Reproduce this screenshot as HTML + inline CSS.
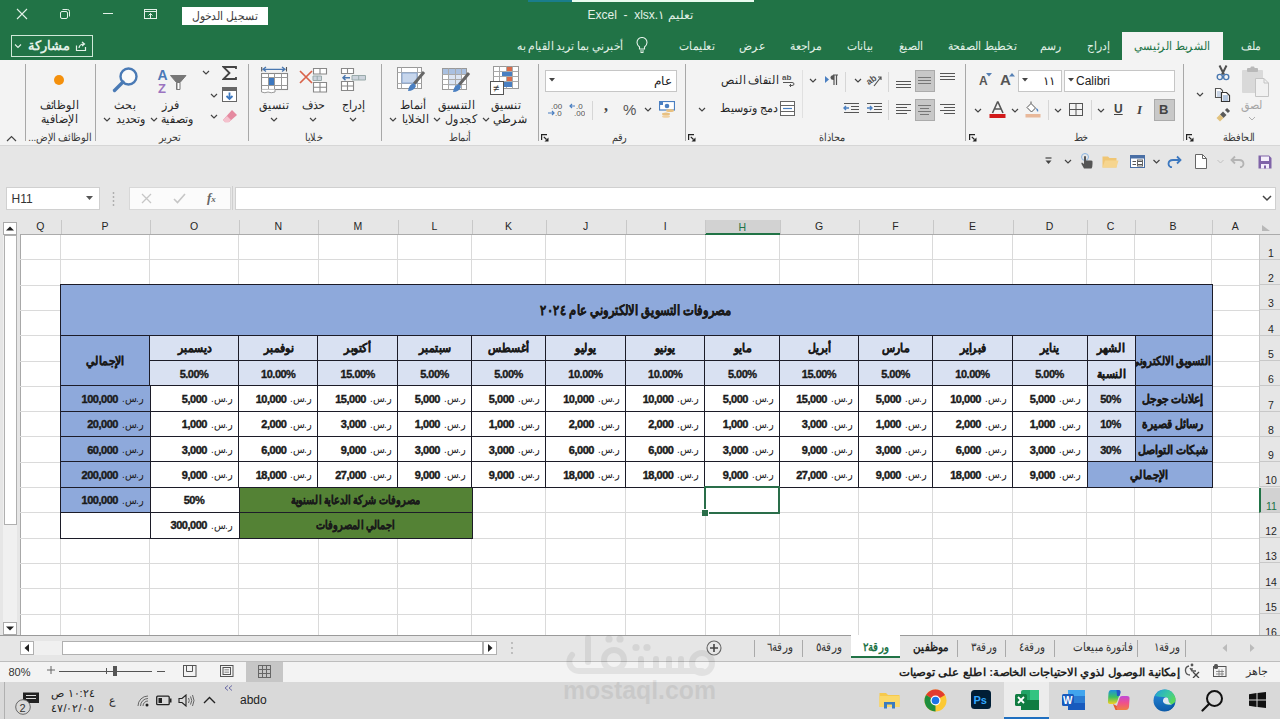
<!DOCTYPE html><html><head><meta charset="utf-8"><style>*{margin:0;padding:0;box-sizing:border-box}
html,body{width:1280px;height:719px;overflow:hidden;background:#e6e6e6;font-family:"Liberation Sans",sans-serif;position:relative}
.a{position:absolute}
#grid{position:absolute;left:0;top:0;width:1280px;height:719px}
.colhdr{position:absolute;left:20px;top:216px;width:1260px;height:18.5px;background:#e6e6e6;border-bottom:1px solid #ababab}
.ch{position:absolute;top:216px;height:18px;line-height:20px;text-align:center;font-size:10.5px;color:#262626}
.ch.sel{background:#d2d2d2;color:#217346;border-bottom:2px solid #217346;top:219.5px;height:15.5px;line-height:14px}
.chsep{position:absolute;top:220px;width:1px;height:14px;background:#c8c8c8}
.corner{position:absolute;left:1259px;top:216px;width:21px;height:18px}
.rh{position:absolute;left:1259px;width:21px;background:#e6e6e6;border-bottom:1px solid #c8c8c8;border-left:1px solid #c8c8c8;font-size:12px;color:#262626}
.rh span{position:absolute;left:0;right:-2px;text-align:center;bottom:0px;line-height:11px;font-size:10.5px}
.rh.sel{background:#d2d2d2;color:#217346;border-left:2px solid #217346}
.cells{position:absolute;left:20px;top:234.5px;width:1239px;height:401px;background:#fff}
.vl{position:absolute;top:234.5px;height:401px;width:1px;background:#dadada}
.hl{position:absolute;left:20px;width:1239px;height:1px;background:#dadada}
.tc{position:absolute;display:flex;align-items:center;justify-content:center;font-weight:bold;font-size:12px;color:#1a1a1a;white-space:nowrap;direction:rtl}
.tc.bd{outline:1px solid #1c1c28;outline-offset:-0.5px}
.tc.title{font-size:14px}
.tc.title .t{font-size:14px;transform:scaleX(0.82)}
.tc.val{justify-content:flex-end;padding:0 6.5px 0 0;direction:ltr;gap:4px}
.cur{font-weight:normal;font-size:11px;order:2;direction:rtl;display:inline-block;transform:scaleX(0.88);transform-origin:right center;margin-left:-3px}
.amt{order:1;font-size:11px;letter-spacing:-0.5px;-webkit-text-stroke:0.4px #1a1a1a}
.selbox{position:absolute;border:2px solid #2a6e4a}
.handle{position:absolute;width:7px;height:7px;background:#2a6e4a;border:1px solid #fff;border-left:none;border-bottom:none;width:6.5px}
.ovf{position:absolute;right:1px;top:50%;transform:translateY(-50%) scaleX(0.83);transform-origin:right center;-webkit-text-stroke:0.35px #1a1a1a}
.clip{overflow:hidden}
.signin{left:182px;top:6.5px;width:86px;height:18px;background:#fff;color:#3c3c3c;font-size:11.5px;line-height:18px;text-align:center;direction:rtl}
.signin span{display:inline-block;transform:scaleX(0.9)}
.wtitle{left:540px;top:6px;width:200px;text-align:center;color:#e3f1e8;font-size:12px;line-height:18px;white-space:nowrap}
.share{left:11px;top:35px;width:82px;height:22px;border:1.3px solid #cfe9d8}
.shtxt{position:absolute;right:22px;top:1px;font-size:13px;font-weight:bold;color:#e3f1e8;line-height:18px}
.tab{top:37px;transform:translateX(-50%) scaleX(0.9);color:#e3f1e8;font-size:12px;line-height:18px;white-space:nowrap;direction:rtl}
.tab.act{color:#217346}
.sep{position:absolute;top:64px;width:1px;height:77px;background:#a8a8a8}
.glbl{position:absolute;top:131px;transform:translateX(-50%) scaleX(0.88);font-size:11px;line-height:13px;color:#3a3a3a;white-space:nowrap;direction:rtl}
.rt{position:absolute;transform:translateX(-50%) scaleX(0.92);font-size:11.5px;line-height:13px;color:#262626;white-space:nowrap;direction:rtl}
.rt.dis{color:#a6a6a6}
.box{position:absolute;background:#fff;border:1px solid #c6c6c6}
.tsep{position:absolute;top:640px;width:1px;height:17px;background:#aaa}
.stab{position:absolute;top:640px;transform:translateX(-50%) scaleX(0.86);font-size:11.5px;line-height:15px;color:#333;white-space:nowrap;direction:rtl}

.tc .t{display:inline-block;font-size:11.5px;transform:scaleX(0.9);-webkit-text-stroke:0.35px #1a1a1a}
.tc.num .t{transform:none;font-size:11px;letter-spacing:-0.5px;-webkit-text-stroke:0.35px #1a1a1a}
.tc.grn .t{transform:scaleX(0.81)}
</style></head><body>
<div id="grid"><div class="colhdr"></div><div class="ch" style="left:20px;width:40.5px">Q</div><div class="ch" style="left:60.5px;width:89.0px">P</div><div class="chsep" style="left:60.5px"></div><div class="ch" style="left:149.5px;width:89.0px">O</div><div class="chsep" style="left:149.5px"></div><div class="ch" style="left:238.5px;width:79.5px">N</div><div class="chsep" style="left:238.5px"></div><div class="ch" style="left:318px;width:79.5px">M</div><div class="chsep" style="left:318px"></div><div class="ch" style="left:397.5px;width:74.0px">L</div><div class="chsep" style="left:397.5px"></div><div class="ch" style="left:471.5px;width:74.0px">K</div><div class="chsep" style="left:471.5px"></div><div class="ch" style="left:545.5px;width:80.0px">J</div><div class="chsep" style="left:545.5px"></div><div class="ch" style="left:625.5px;width:79.5px">I</div><div class="chsep" style="left:625.5px"></div><div class="ch sel" style="left:705px;width:74.5px">H</div><div class="chsep" style="left:705px"></div><div class="ch" style="left:779.5px;width:79.0px">G</div><div class="chsep" style="left:779.5px"></div><div class="ch" style="left:858.5px;width:74.0px">F</div><div class="chsep" style="left:858.5px"></div><div class="ch" style="left:932.5px;width:80.0px">E</div><div class="chsep" style="left:932.5px"></div><div class="ch" style="left:1012.5px;width:74.0px">D</div><div class="chsep" style="left:1012.5px"></div><div class="ch" style="left:1086.5px;width:48.0px">C</div><div class="chsep" style="left:1086.5px"></div><div class="ch" style="left:1134.5px;width:77.0px">B</div><div class="chsep" style="left:1134.5px"></div><div class="ch" style="left:1211.5px;width:47.5px">A</div><div class="chsep" style="left:1211.5px"></div><div class="corner"></div><svg class="a" style="left:1262px;top:225px" width="8" height="6" viewBox="0 0 8 6"><path d="M0 6H8L0 0Z" fill="#b8b8b8"/></svg><div class="rh" style="top:234.5px;height:25.30000000000001px"><span>1</span></div><div class="rh" style="top:259.8px;height:25.30000000000001px"><span>2</span></div><div class="rh" style="top:285.1px;height:25.299999999999955px"><span>3</span></div><div class="rh" style="top:310.4px;height:25.30000000000001px"><span>4</span></div><div class="rh" style="top:335.7px;height:25.30000000000001px"><span>5</span></div><div class="rh" style="top:361.0px;height:25.30000000000001px"><span>6</span></div><div class="rh" style="top:386.3px;height:25.30000000000001px"><span>7</span></div><div class="rh" style="top:411.6px;height:25.299999999999955px"><span>8</span></div><div class="rh" style="top:436.9px;height:25.300000000000068px"><span>9</span></div><div class="rh" style="top:462.20000000000005px;height:25.299999999999955px"><span>10</span></div><div class="rh sel" style="top:487.5px;height:25.299999999999955px"><span>11</span></div><div class="rh" style="top:512.8px;height:25.300000000000068px"><span>12</span></div><div class="rh" style="top:538.1px;height:25.300000000000068px"><span>13</span></div><div class="rh" style="top:563.4000000000001px;height:25.299999999999955px"><span>14</span></div><div class="rh" style="top:588.7px;height:25.299999999999955px"><span>15</span></div><div class="rh" style="top:614.0px;height:25.299999999999955px"><span>16</span></div><div class="cells"></div><div class="a" style="left:19.5px;top:234px;width:1px;height:402px;background:#a8a8a8"></div><div class="vl" style="left:60.0px"></div><div class="vl" style="left:149.0px"></div><div class="vl" style="left:238.0px"></div><div class="vl" style="left:317.5px"></div><div class="vl" style="left:397.0px"></div><div class="vl" style="left:471.0px"></div><div class="vl" style="left:545.0px"></div><div class="vl" style="left:625.0px"></div><div class="vl" style="left:704.5px"></div><div class="vl" style="left:779.0px"></div><div class="vl" style="left:858.0px"></div><div class="vl" style="left:932.0px"></div><div class="vl" style="left:1012.0px"></div><div class="vl" style="left:1086.0px"></div><div class="vl" style="left:1134.0px"></div><div class="vl" style="left:1211.0px"></div><div class="hl" style="top:259.3px"></div><div class="hl" style="top:284.6px"></div><div class="hl" style="top:309.9px"></div><div class="hl" style="top:335.2px"></div><div class="hl" style="top:360.5px"></div><div class="hl" style="top:385.8px"></div><div class="hl" style="top:411.1px"></div><div class="hl" style="top:436.4px"></div><div class="hl" style="top:461.70000000000005px"></div><div class="hl" style="top:487.0px"></div><div class="hl" style="top:512.3px"></div><div class="hl" style="top:537.6px"></div><div class="hl" style="top:562.9000000000001px"></div><div class="hl" style="top:588.2px"></div><div class="hl" style="top:613.5px"></div><div class="hl" style="top:638.8px"></div><div class="tc bd title" style="left:60.5px;top:285.1px;width:1151.0px;height:50.599999999999966px;background:#8ea9db;"><span class="t">مصروفات التسويق الالكتروني عام ٢٠٢٤</span></div><div class="tc bd lbl" style="left:60.5px;top:335.7px;width:89.0px;height:50.60000000000002px;background:#8ea9db;"><span class="t">الإجمالي</span></div><div class="tc bd clip" style="left:1134.5px;top:335.7px;width:77.0px;height:50.60000000000002px;background:#8ea9db;"><span class="ovf">التسويق الالكتروني</span></div><div class="tc bd lbl" style="left:1086.5px;top:335.7px;width:48.0px;height:25.30000000000001px;background:#d9e1f2;"><span class="t">الشهر</span></div><div class="tc bd lbl" style="left:1086.5px;top:361.0px;width:48.0px;height:25.30000000000001px;background:#d9e1f2;"><span class="t">النسبة</span></div><div class="tc bd lbl" style="left:149.5px;top:335.7px;width:89.0px;height:25.30000000000001px;background:#d9e1f2;"><span class="t">ديسمبر</span></div><div class="tc bd num" style="left:149.5px;top:361.0px;width:89.0px;height:25.30000000000001px;background:#d9e1f2;"><span class="t">5.00%</span></div><div class="tc bd lbl" style="left:238.5px;top:335.7px;width:79.5px;height:25.30000000000001px;background:#d9e1f2;"><span class="t">نوفمبر</span></div><div class="tc bd num" style="left:238.5px;top:361.0px;width:79.5px;height:25.30000000000001px;background:#d9e1f2;"><span class="t">10.00%</span></div><div class="tc bd lbl" style="left:318px;top:335.7px;width:79.5px;height:25.30000000000001px;background:#d9e1f2;"><span class="t">أكتوبر</span></div><div class="tc bd num" style="left:318px;top:361.0px;width:79.5px;height:25.30000000000001px;background:#d9e1f2;"><span class="t">15.00%</span></div><div class="tc bd lbl" style="left:397.5px;top:335.7px;width:74.0px;height:25.30000000000001px;background:#d9e1f2;"><span class="t">سبتمبر</span></div><div class="tc bd num" style="left:397.5px;top:361.0px;width:74.0px;height:25.30000000000001px;background:#d9e1f2;"><span class="t">5.00%</span></div><div class="tc bd lbl" style="left:471.5px;top:335.7px;width:74.0px;height:25.30000000000001px;background:#d9e1f2;"><span class="t">أغسطس</span></div><div class="tc bd num" style="left:471.5px;top:361.0px;width:74.0px;height:25.30000000000001px;background:#d9e1f2;"><span class="t">5.00%</span></div><div class="tc bd lbl" style="left:545.5px;top:335.7px;width:80.0px;height:25.30000000000001px;background:#d9e1f2;"><span class="t">يوليو</span></div><div class="tc bd num" style="left:545.5px;top:361.0px;width:80.0px;height:25.30000000000001px;background:#d9e1f2;"><span class="t">10.00%</span></div><div class="tc bd lbl" style="left:625.5px;top:335.7px;width:79.5px;height:25.30000000000001px;background:#d9e1f2;"><span class="t">يونيو</span></div><div class="tc bd num" style="left:625.5px;top:361.0px;width:79.5px;height:25.30000000000001px;background:#d9e1f2;"><span class="t">10.00%</span></div><div class="tc bd lbl" style="left:705px;top:335.7px;width:74.5px;height:25.30000000000001px;background:#d9e1f2;"><span class="t">مايو</span></div><div class="tc bd num" style="left:705px;top:361.0px;width:74.5px;height:25.30000000000001px;background:#d9e1f2;"><span class="t">5.00%</span></div><div class="tc bd lbl" style="left:779.5px;top:335.7px;width:79.0px;height:25.30000000000001px;background:#d9e1f2;"><span class="t">أبريل</span></div><div class="tc bd num" style="left:779.5px;top:361.0px;width:79.0px;height:25.30000000000001px;background:#d9e1f2;"><span class="t">15.00%</span></div><div class="tc bd lbl" style="left:858.5px;top:335.7px;width:74.0px;height:25.30000000000001px;background:#d9e1f2;"><span class="t">مارس</span></div><div class="tc bd num" style="left:858.5px;top:361.0px;width:74.0px;height:25.30000000000001px;background:#d9e1f2;"><span class="t">5.00%</span></div><div class="tc bd lbl" style="left:932.5px;top:335.7px;width:80.0px;height:25.30000000000001px;background:#d9e1f2;"><span class="t">فبراير</span></div><div class="tc bd num" style="left:932.5px;top:361.0px;width:80.0px;height:25.30000000000001px;background:#d9e1f2;"><span class="t">10.00%</span></div><div class="tc bd lbl" style="left:1012.5px;top:335.7px;width:74.0px;height:25.30000000000001px;background:#d9e1f2;"><span class="t">يناير</span></div><div class="tc bd num" style="left:1012.5px;top:361.0px;width:74.0px;height:25.30000000000001px;background:#d9e1f2;"><span class="t">5.00%</span></div><div class="tc bd lbl" style="left:1134.5px;top:386.3px;width:77.0px;height:25.30000000000001px;background:#8ea9db;"><span class="t">إعلانات جوجل</span></div><div class="tc bd num" style="left:1086.5px;top:386.3px;width:48.0px;height:25.30000000000001px;background:#d9e1f2;"><span class="t">50%</span></div><div class="tc bd val" style="left:149.5px;top:386.3px;width:89.0px;height:25.30000000000001px;background:#fff;"><span class="cur">ر.س.</span><span class="amt">5,000</span></div><div class="tc bd val" style="left:238.5px;top:386.3px;width:79.5px;height:25.30000000000001px;background:#fff;"><span class="cur">ر.س.</span><span class="amt">10,000</span></div><div class="tc bd val" style="left:318px;top:386.3px;width:79.5px;height:25.30000000000001px;background:#fff;"><span class="cur">ر.س.</span><span class="amt">15,000</span></div><div class="tc bd val" style="left:397.5px;top:386.3px;width:74.0px;height:25.30000000000001px;background:#fff;"><span class="cur">ر.س.</span><span class="amt">5,000</span></div><div class="tc bd val" style="left:471.5px;top:386.3px;width:74.0px;height:25.30000000000001px;background:#fff;"><span class="cur">ر.س.</span><span class="amt">5,000</span></div><div class="tc bd val" style="left:545.5px;top:386.3px;width:80.0px;height:25.30000000000001px;background:#fff;"><span class="cur">ر.س.</span><span class="amt">10,000</span></div><div class="tc bd val" style="left:625.5px;top:386.3px;width:79.5px;height:25.30000000000001px;background:#fff;"><span class="cur">ر.س.</span><span class="amt">10,000</span></div><div class="tc bd val" style="left:705px;top:386.3px;width:74.5px;height:25.30000000000001px;background:#fff;"><span class="cur">ر.س.</span><span class="amt">5,000</span></div><div class="tc bd val" style="left:779.5px;top:386.3px;width:79.0px;height:25.30000000000001px;background:#fff;"><span class="cur">ر.س.</span><span class="amt">15,000</span></div><div class="tc bd val" style="left:858.5px;top:386.3px;width:74.0px;height:25.30000000000001px;background:#fff;"><span class="cur">ر.س.</span><span class="amt">5,000</span></div><div class="tc bd val" style="left:932.5px;top:386.3px;width:80.0px;height:25.30000000000001px;background:#fff;"><span class="cur">ر.س.</span><span class="amt">10,000</span></div><div class="tc bd val" style="left:1012.5px;top:386.3px;width:74.0px;height:25.30000000000001px;background:#fff;"><span class="cur">ر.س.</span><span class="amt">5,000</span></div><div class="tc bd val" style="left:60.5px;top:386.3px;width:89.0px;height:25.30000000000001px;background:#8ea9db;"><span class="cur">ر.س.</span><span class="amt">100,000</span></div><div class="tc bd lbl" style="left:1134.5px;top:411.6px;width:77.0px;height:25.299999999999955px;background:#8ea9db;"><span class="t">رسائل قصيرة</span></div><div class="tc bd num" style="left:1086.5px;top:411.6px;width:48.0px;height:25.299999999999955px;background:#d9e1f2;"><span class="t">10%</span></div><div class="tc bd val" style="left:149.5px;top:411.6px;width:89.0px;height:25.299999999999955px;background:#fff;"><span class="cur">ر.س.</span><span class="amt">1,000</span></div><div class="tc bd val" style="left:238.5px;top:411.6px;width:79.5px;height:25.299999999999955px;background:#fff;"><span class="cur">ر.س.</span><span class="amt">2,000</span></div><div class="tc bd val" style="left:318px;top:411.6px;width:79.5px;height:25.299999999999955px;background:#fff;"><span class="cur">ر.س.</span><span class="amt">3,000</span></div><div class="tc bd val" style="left:397.5px;top:411.6px;width:74.0px;height:25.299999999999955px;background:#fff;"><span class="cur">ر.س.</span><span class="amt">1,000</span></div><div class="tc bd val" style="left:471.5px;top:411.6px;width:74.0px;height:25.299999999999955px;background:#fff;"><span class="cur">ر.س.</span><span class="amt">1,000</span></div><div class="tc bd val" style="left:545.5px;top:411.6px;width:80.0px;height:25.299999999999955px;background:#fff;"><span class="cur">ر.س.</span><span class="amt">2,000</span></div><div class="tc bd val" style="left:625.5px;top:411.6px;width:79.5px;height:25.299999999999955px;background:#fff;"><span class="cur">ر.س.</span><span class="amt">2,000</span></div><div class="tc bd val" style="left:705px;top:411.6px;width:74.5px;height:25.299999999999955px;background:#fff;"><span class="cur">ر.س.</span><span class="amt">1,000</span></div><div class="tc bd val" style="left:779.5px;top:411.6px;width:79.0px;height:25.299999999999955px;background:#fff;"><span class="cur">ر.س.</span><span class="amt">3,000</span></div><div class="tc bd val" style="left:858.5px;top:411.6px;width:74.0px;height:25.299999999999955px;background:#fff;"><span class="cur">ر.س.</span><span class="amt">1,000</span></div><div class="tc bd val" style="left:932.5px;top:411.6px;width:80.0px;height:25.299999999999955px;background:#fff;"><span class="cur">ر.س.</span><span class="amt">2,000</span></div><div class="tc bd val" style="left:1012.5px;top:411.6px;width:74.0px;height:25.299999999999955px;background:#fff;"><span class="cur">ر.س.</span><span class="amt">1,000</span></div><div class="tc bd val" style="left:60.5px;top:411.6px;width:89.0px;height:25.299999999999955px;background:#8ea9db;"><span class="cur">ر.س.</span><span class="amt">20,000</span></div><div class="tc bd lbl" style="left:1134.5px;top:436.9px;width:77.0px;height:25.300000000000068px;background:#8ea9db;"><span class="t">شبكات التواصل</span></div><div class="tc bd num" style="left:1086.5px;top:436.9px;width:48.0px;height:25.300000000000068px;background:#d9e1f2;"><span class="t">30%</span></div><div class="tc bd val" style="left:149.5px;top:436.9px;width:89.0px;height:25.300000000000068px;background:#fff;"><span class="cur">ر.س.</span><span class="amt">3,000</span></div><div class="tc bd val" style="left:238.5px;top:436.9px;width:79.5px;height:25.300000000000068px;background:#fff;"><span class="cur">ر.س.</span><span class="amt">6,000</span></div><div class="tc bd val" style="left:318px;top:436.9px;width:79.5px;height:25.300000000000068px;background:#fff;"><span class="cur">ر.س.</span><span class="amt">9,000</span></div><div class="tc bd val" style="left:397.5px;top:436.9px;width:74.0px;height:25.300000000000068px;background:#fff;"><span class="cur">ر.س.</span><span class="amt">3,000</span></div><div class="tc bd val" style="left:471.5px;top:436.9px;width:74.0px;height:25.300000000000068px;background:#fff;"><span class="cur">ر.س.</span><span class="amt">3,000</span></div><div class="tc bd val" style="left:545.5px;top:436.9px;width:80.0px;height:25.300000000000068px;background:#fff;"><span class="cur">ر.س.</span><span class="amt">6,000</span></div><div class="tc bd val" style="left:625.5px;top:436.9px;width:79.5px;height:25.300000000000068px;background:#fff;"><span class="cur">ر.س.</span><span class="amt">6,000</span></div><div class="tc bd val" style="left:705px;top:436.9px;width:74.5px;height:25.300000000000068px;background:#fff;"><span class="cur">ر.س.</span><span class="amt">3,000</span></div><div class="tc bd val" style="left:779.5px;top:436.9px;width:79.0px;height:25.300000000000068px;background:#fff;"><span class="cur">ر.س.</span><span class="amt">9,000</span></div><div class="tc bd val" style="left:858.5px;top:436.9px;width:74.0px;height:25.300000000000068px;background:#fff;"><span class="cur">ر.س.</span><span class="amt">3,000</span></div><div class="tc bd val" style="left:932.5px;top:436.9px;width:80.0px;height:25.300000000000068px;background:#fff;"><span class="cur">ر.س.</span><span class="amt">6,000</span></div><div class="tc bd val" style="left:1012.5px;top:436.9px;width:74.0px;height:25.300000000000068px;background:#fff;"><span class="cur">ر.س.</span><span class="amt">3,000</span></div><div class="tc bd val" style="left:60.5px;top:436.9px;width:89.0px;height:25.300000000000068px;background:#8ea9db;"><span class="cur">ر.س.</span><span class="amt">60,000</span></div><div class="tc bd lbl" style="left:1086.5px;top:462.20000000000005px;width:125.0px;height:25.299999999999955px;background:#8ea9db;"><span class="t">الإجمالي</span></div><div class="tc bd val" style="left:149.5px;top:462.20000000000005px;width:89.0px;height:25.299999999999955px;background:#fff;"><span class="cur">ر.س.</span><span class="amt">9,000</span></div><div class="tc bd val" style="left:238.5px;top:462.20000000000005px;width:79.5px;height:25.299999999999955px;background:#fff;"><span class="cur">ر.س.</span><span class="amt">18,000</span></div><div class="tc bd val" style="left:318px;top:462.20000000000005px;width:79.5px;height:25.299999999999955px;background:#fff;"><span class="cur">ر.س.</span><span class="amt">27,000</span></div><div class="tc bd val" style="left:397.5px;top:462.20000000000005px;width:74.0px;height:25.299999999999955px;background:#fff;"><span class="cur">ر.س.</span><span class="amt">9,000</span></div><div class="tc bd val" style="left:471.5px;top:462.20000000000005px;width:74.0px;height:25.299999999999955px;background:#fff;"><span class="cur">ر.س.</span><span class="amt">9,000</span></div><div class="tc bd val" style="left:545.5px;top:462.20000000000005px;width:80.0px;height:25.299999999999955px;background:#fff;"><span class="cur">ر.س.</span><span class="amt">18,000</span></div><div class="tc bd val" style="left:625.5px;top:462.20000000000005px;width:79.5px;height:25.299999999999955px;background:#fff;"><span class="cur">ر.س.</span><span class="amt">18,000</span></div><div class="tc bd val" style="left:705px;top:462.20000000000005px;width:74.5px;height:25.299999999999955px;background:#fff;"><span class="cur">ر.س.</span><span class="amt">9,000</span></div><div class="tc bd val" style="left:779.5px;top:462.20000000000005px;width:79.0px;height:25.299999999999955px;background:#fff;"><span class="cur">ر.س.</span><span class="amt">27,000</span></div><div class="tc bd val" style="left:858.5px;top:462.20000000000005px;width:74.0px;height:25.299999999999955px;background:#fff;"><span class="cur">ر.س.</span><span class="amt">9,000</span></div><div class="tc bd val" style="left:932.5px;top:462.20000000000005px;width:80.0px;height:25.299999999999955px;background:#fff;"><span class="cur">ر.س.</span><span class="amt">18,000</span></div><div class="tc bd val" style="left:1012.5px;top:462.20000000000005px;width:74.0px;height:25.299999999999955px;background:#fff;"><span class="cur">ر.س.</span><span class="amt">9,000</span></div><div class="tc bd val" style="left:60.5px;top:462.20000000000005px;width:89.0px;height:25.299999999999955px;background:#8ea9db;"><span class="cur">ر.س.</span><span class="amt">200,000</span></div><div class="tc bd lbl grn" style="left:238.5px;top:487.5px;width:233.0px;height:25.299999999999955px;background:#548235;"><span class="t">مصروفات شركة الدعاية السنوية</span></div><div class="tc bd num" style="left:149.5px;top:487.5px;width:89.0px;height:25.299999999999955px;background:#fff;"><span class="t">50%</span></div><div class="tc bd val" style="left:60.5px;top:487.5px;width:89.0px;height:25.299999999999955px;background:#8ea9db;"><span class="cur">ر.س.</span><span class="amt">100,000</span></div><div class="tc bd lbl grn" style="left:238.5px;top:512.8px;width:233.0px;height:25.300000000000068px;background:#548235;"><span class="t">اجمالي المصروفات</span></div><div class="tc bd val" style="left:149.5px;top:512.8px;width:89.0px;height:25.300000000000068px;background:#fff;"><span class="cur">ر.س.</span><span class="amt">300,000</span></div><div class="tc bd val" style="left:60.5px;top:512.8px;width:89.0px;height:25.300000000000068px;background:#fff;"></div><div class="selbox" style="left:704px;top:486px;width:76px;height:27.5px"></div><div class="handle" style="left:702px;top:509px"></div></div>
<div class="a" style="left:0;top:0;width:1280px;height:60px;background:#217346"></div>
<div class="a" style="left:528px;top:0;width:44px;height:2px;background:#1a7d8c"></div>
<div class="a" style="left:572px;top:0;width:182px;height:2px;background:#e9fbef"></div>
<!-- window controls -->
<svg class="a" style="left:15px;top:7px" width="14" height="14" viewBox="0 0 14 14"><path d="M2 2L12 12M12 2L2 12" stroke="#e3f1e8" stroke-width="1.1"/></svg>
<svg class="a" style="left:58px;top:7px" width="14" height="14" viewBox="0 0 14 14"><rect x="2.5" y="4.5" width="7" height="7" rx="1.5" fill="none" stroke="#e3f1e8" stroke-width="1"/><path d="M4.5 2.5H9.5Q11.5 2.5 11.5 4.5V9.5" fill="none" stroke="#e3f1e8" stroke-width="1"/></svg>
<div class="a" style="left:103px;top:13px;width:10px;height:1px;background:#e3f1e8"></div>
<svg class="a" style="left:143px;top:8px" width="15" height="12" viewBox="0 0 15 12"><rect x="1.5" y="1.5" width="12" height="9" fill="none" stroke="#e3f1e8" stroke-width="1"/><path d="M1.5 3.5H13.5" stroke="#e3f1e8" stroke-width="1"/><path d="M7.5 10V5.5M5.5 7.5L7.5 5.5L9.5 7.5" fill="none" stroke="#e3f1e8" stroke-width="1"/></svg>
<div class="a signin"><span>تسجيل الدخول</span></div>
<div class="a wtitle"><span style="display:inline-block">Excel &nbsp;-&nbsp; xlsx.١</span> <span style="display:inline-block">تعليم</span></div>
<!-- share -->
<div class="a share"><span class="shtxt">مشاركة</span></div>
<svg class="a" style="left:74px;top:39px" width="14" height="14" viewBox="0 0 14 14"><path d="M2.5 6.5V11.5H11.5V8" fill="none" stroke="#e3f1e8" stroke-width="1.2"/><path d="M5 9Q5.5 5 10 5M8 3L10.5 5L8 7" fill="none" stroke="#e3f1e8" stroke-width="1.2"/></svg>
<svg class="a" style="left:14px;top:43px" width="8" height="6" viewBox="0 0 8 6"><path d="M1 1.5L4 4.5L7 1.5" fill="none" stroke="#e3f1e8" stroke-width="1.1"/></svg>
<!-- tabs -->
<div class="a" style="left:1122px;top:32px;width:101px;height:28px;background:#f3f3f3"></div>
<div class="a tab" style="left:1251px">ملف</div>
<div class="a tab act" style="left:1172px">الشريط الرئيسي</div>
<div class="a tab" style="left:1098px">إدراج</div>
<div class="a tab" style="left:1051px">رسم</div>
<div class="a tab" style="left:982px">تخطيط الصفحة</div>
<div class="a tab" style="left:911px">الصيغ</div>
<div class="a tab" style="left:860px">بيانات</div>
<div class="a tab" style="left:806px">مراجعة</div>
<div class="a tab" style="left:752px">عرض</div>
<div class="a tab" style="left:697px">تعليمات</div>
<svg class="a" style="left:636px;top:37px" width="12" height="17" viewBox="0 0 12 17"><path d="M3.5 12V10Q1 8 1 5.5A5 5 0 0 1 11 5.5Q11 8 8.5 10V12ZM4 14H8M4.5 15.5H7.5" fill="none" stroke="#e3f1e8" stroke-width="1.1"/></svg>
<div class="a tab" style="left:570px">أخبرني بما تريد القيام به</div>

<div class="a" style="left:0;top:60px;width:1280px;height:86px;background:#f3f3f3;border-bottom:1px solid #d6d6d6"></div>
<!-- group separators -->
<div class="sep" style="left:25px"></div>
<div class="sep" style="left:95px"></div>
<div class="sep" style="left:248px"></div>
<div class="sep" style="left:381px"></div>
<div class="sep" style="left:538px"></div>
<div class="sep" style="left:685px"></div>
<div class="sep" style="left:965px"></div>
<div class="sep" style="left:1183px"></div>
<!-- group labels -->
<div class="glbl" style="left:1239px">الحافظة</div>
<div class="glbl" style="left:1081px">خط</div>
<div class="glbl" style="left:832px">محاذاة</div>
<div class="glbl" style="left:619px">رقم</div>
<div class="glbl" style="left:460px">أنماط</div>
<div class="glbl" style="left:314px">خلايا</div>
<div class="glbl" style="left:170px">تحرير</div>
<div class="glbl" style="left:60px">الوظائف الإض...</div>
<!-- dialog launchers -->
<svg class="a" style="left:1186px;top:134px" width="8" height="8" viewBox="0 0 8 8"><path d="M0.6 6V0.6H6" fill="none" stroke="#222" stroke-width="1.2"/><path d="M2.8 2.8L5.5 5.5" stroke="#222" stroke-width="1.2"/><path d="M7.5 3.5V7.5H3.5Z" fill="#222"/></svg>
<svg class="a" style="left:969px;top:134px" width="8" height="8" viewBox="0 0 8 8"><path d="M0.6 6V0.6H6" fill="none" stroke="#222" stroke-width="1.2"/><path d="M2.8 2.8L5.5 5.5" stroke="#222" stroke-width="1.2"/><path d="M7.5 3.5V7.5H3.5Z" fill="#222"/></svg>
<svg class="a" style="left:688px;top:134px" width="8" height="8" viewBox="0 0 8 8"><path d="M0.6 6V0.6H6" fill="none" stroke="#222" stroke-width="1.2"/><path d="M2.8 2.8L5.5 5.5" stroke="#222" stroke-width="1.2"/><path d="M7.5 3.5V7.5H3.5Z" fill="#222"/></svg>
<svg class="a" style="left:541px;top:134px" width="8" height="8" viewBox="0 0 8 8"><path d="M0.6 6V0.6H6" fill="none" stroke="#222" stroke-width="1.2"/><path d="M2.8 2.8L5.5 5.5" stroke="#222" stroke-width="1.2"/><path d="M7.5 3.5V7.5H3.5Z" fill="#222"/></svg>
<!-- collapse -->
<svg class="a" style="left:6px;top:135px" width="11" height="7" viewBox="0 0 11 7"><path d="M1 6L5.5 1.5L10 6" fill="none" stroke="#444" stroke-width="1.2"/></svg>

<!-- ===== Clipboard ===== -->
<svg class="a" style="left:1240px;top:66px" width="30" height="31" viewBox="0 0 30 31"><rect x="2" y="4" width="21" height="23" rx="1" fill="#d9d9d9"/><rect x="7" y="2" width="11" height="4" rx="1" fill="#b9b9b9"/><rect x="10.5" y="0.5" width="4" height="3" rx="1" fill="#b9b9b9"/><path d="M15.5 12.5H24L28.5 17V30.5H15.5Z" fill="#f1f1f1" stroke="#c4c4c4"/><path d="M24 12.5V17H28.5" fill="none" stroke="#c4c4c4"/></svg>
<div class="rt dis" style="left:1252px;top:99px">لصق</div>
<svg class="a" style="left:1248px;top:116px" width="8" height="5" viewBox="0 0 8 5"><path d="M1 1L4 4L7 1" fill="none" stroke="#b0b0b0" stroke-width="1"/></svg>
<svg class="a" style="left:1215px;top:65px" width="16" height="16" viewBox="0 0 16 16"><path d="M4.5 0.5L9 9.5M11.5 0.5L7 9.5" stroke="#505050" stroke-width="2"/><circle cx="4.8" cy="12" r="2.6" fill="#f3f3f3" stroke="#4a78b0" stroke-width="1.4"/><circle cx="11.2" cy="12" r="2.6" fill="#f3f3f3" stroke="#4a78b0" stroke-width="1.4"/></svg>
<svg class="a" style="left:1214px;top:87px" width="17" height="16" viewBox="0 0 17 16"><path d="M1.5 1.5H6.5L8.5 3.5V10.5H1.5Z" fill="#fff" stroke="#555" stroke-width="1.1"/><path d="M3 5H7M3 7H7M3 9H7" stroke="#8aa4c8" stroke-width="0.9"/><path d="M7.5 5.5H12.5L15.5 8.5V14.5H7.5Z" fill="#fff" stroke="#333" stroke-width="1.2"/><path d="M9 9H14M9 11H14M9 13H14" stroke="#6b8fc0" stroke-width="1"/></svg>
<svg class="a" style="left:1215px;top:107px" width="16" height="16" viewBox="0 0 16 16"><path d="M11 2L14 5" stroke="#555" stroke-width="3"/><path d="M8 4.5L11.5 8L8.5 11L5 7.5Z" fill="#5a5a5a"/><path d="M5 7.5L8.5 11L5 14.5L1.5 11Z" fill="#e2c27e"/></svg>
<svg class="a" style="left:1196px;top:92px" width="8" height="5" viewBox="0 0 8 5"><path d="M1 1L4 4L7 1" fill="none" stroke="#444" stroke-width="1.2"/></svg>

<!-- ===== Font ===== -->
<div class="box" style="left:1064px;top:70px;width:111px;height:22px"><span style="position:absolute;left:11px;top:2px;font-size:12px;color:#222;line-height:17px">Calibri</span></div>
<svg class="a" style="left:1068px;top:78px" width="6" height="4" viewBox="0 0 6 4"><path d="M0 0H6L3 3.5Z" fill="#444"/></svg>
<div class="box" style="left:1018px;top:70px;width:44px;height:22px"><span style="position:absolute;right:6px;top:2px;font-size:12px;color:#222;line-height:17px">١١</span></div>
<svg class="a" style="left:1022px;top:78px" width="6" height="4" viewBox="0 0 6 4"><path d="M0 0H6L3 3.5Z" fill="#444"/></svg>
<div class="a" style="left:1000px;top:71px;font-size:15px;color:#555;line-height:17px;font-weight:bold">A</div>
<svg class="a" style="left:1009px;top:73px" width="6" height="4" viewBox="0 0 6 4"><path d="M0 3.5H6L3 0Z" fill="#5580b5"/></svg>
<div class="a" style="left:979px;top:74px;font-size:12px;color:#555;line-height:14px;font-weight:bold">A</div>
<svg class="a" style="left:986px;top:73px" width="6" height="4" viewBox="0 0 6 4"><path d="M0 0H6L3 3.5Z" fill="#5580b5"/></svg>
<!-- row 2 -->
<div class="a" style="left:1154px;top:99px;width:21px;height:22px;background:#c8c8c8;border:1px solid #ababab"></div>
<div class="a" style="left:1159px;top:103px;font-size:13px;font-weight:bold;color:#444;line-height:14px">B</div>
<div class="a" style="left:1137px;top:103px;font-size:13px;font-style:italic;color:#444;line-height:14px;font-family:'Liberation Serif',serif;font-weight:bold">I</div>
<div class="a" style="left:1114px;top:102px;font-size:12px;font-weight:bold;color:#444;line-height:14px;text-decoration:underline">U</div>
<svg class="a" style="left:1097px;top:108px" width="8" height="5" viewBox="0 0 8 5"><path d="M1 1L4 4L7 1" fill="none" stroke="#444" stroke-width="1.2"/></svg>
<div class="a" style="left:1091px;top:100px;width:1px;height:20px;background:#d6d6d6"></div>
<svg class="a" style="left:1069px;top:103px" width="14" height="13" viewBox="0 0 14 13"><rect x="0.5" y="0.5" width="13" height="12" fill="none" stroke="#555"/><path d="M7 0.5V12.5M0.5 6.5H13.5" stroke="#555"/></svg>
<svg class="a" style="left:1054px;top:108px" width="8" height="5" viewBox="0 0 8 5"><path d="M1 1L4 4L7 1" fill="none" stroke="#444" stroke-width="1.2"/></svg>
<div class="a" style="left:1048px;top:100px;width:1px;height:20px;background:#d6d6d6"></div>
<svg class="a" style="left:1025px;top:101px" width="17" height="17" viewBox="0 0 17 17"><path d="M6 2.5L10.5 7L6.5 11L2 6.5Z" fill="#fff" stroke="#555"/><path d="M6 2.5V0.5" stroke="#555"/><path d="M11 7Q14 8 13 11Q11 9.5 11 7Z" fill="#4a7fc1"/><rect x="0.5" y="13" width="15" height="3.5" fill="#e8b89a"/></svg>
<svg class="a" style="left:1011px;top:108px" width="8" height="5" viewBox="0 0 8 5"><path d="M1 1L4 4L7 1" fill="none" stroke="#444" stroke-width="1.2"/></svg>
<svg class="a" style="left:989px;top:101px" width="17" height="18" viewBox="0 0 17 18"><path d="M3.5 12L8.5 1H9L14 12M5.5 8H12" fill="none" stroke="#555" stroke-width="1.6"/><rect x="0.5" y="13" width="16" height="4" fill="#d21a1a"/></svg>
<svg class="a" style="left:974px;top:108px" width="8" height="5" viewBox="0 0 8 5"><path d="M1 1L4 4L7 1" fill="none" stroke="#444" stroke-width="1.2"/></svg>

<!-- ===== Alignment ===== -->
<svg class="a" style="left:940px;top:72px" width="15" height="10" viewBox="0 0 15 10"><path d="M0 1.5H15M0 4.5H15M0 7.5H15" stroke="#555" stroke-width="1"/></svg>
<div class="a" style="left:914.5px;top:70px;width:20.5px;height:22px;background:#c8c8c8;border:1px solid #ababab"></div>
<svg class="a" style="left:917px;top:76px" width="15" height="10" viewBox="0 0 15 10"><path d="M1 1.5H14M1 4.5H14M1 7.5H14" stroke="#777" stroke-width="1"/></svg>
<svg class="a" style="left:896px;top:79px" width="15" height="10" viewBox="0 0 15 10"><path d="M0 2.5H15M0 5.5H15M0 8.5H15" stroke="#555" stroke-width="1"/></svg>
<div class="a" style="left:888px;top:72px;width:1px;height:20px;background:#d6d6d6"></div>
<svg class="a" style="left:865px;top:73px" width="18" height="16" viewBox="0 0 18 16"><text x="2" y="9" font-size="9" font-family="Liberation Sans" font-weight="bold" fill="#555" transform="rotate(-35 8 8)">ab</text><path d="M9 13L16 4M13 4H16V7" fill="none" stroke="#555" stroke-width="1.2"/></svg>
<svg class="a" style="left:854px;top:78px" width="8" height="5" viewBox="0 0 8 5"><path d="M1 1L4 4L7 1" fill="none" stroke="#444" stroke-width="1.2"/></svg>
<div class="a" style="left:845px;top:72px;width:1px;height:20px;background:#d6d6d6"></div>
<svg class="a" style="left:825px;top:74px" width="14" height="12" viewBox="0 0 14 12"><path d="M0 2L4 5.5L0 9Z" fill="#4a7fc1"/><path d="M8 1H13M9 1V11M11.5 1V11" stroke="#555" stroke-width="1.2"/><path d="M9 1Q5.5 1 5.5 3.5Q5.5 6 9 6" fill="#555"/></svg>
<svg class="a" style="left:809px;top:78px" width="8" height="5" viewBox="0 0 8 5"><path d="M1 1L4 4L7 1" fill="none" stroke="#444" stroke-width="1.2"/></svg>
<div class="a" style="left:802px;top:70px;width:1px;height:48px;background:#e0e0e0"></div>
<!-- row2 -->
<svg class="a" style="left:940px;top:103px" width="15" height="12" viewBox="0 0 15 12"><path d="M0 1.5H15M4 4.5H15M0 7.5H15M4 10.5H15" stroke="#555" stroke-width="1"/></svg>
<div class="a" style="left:914.5px;top:99px;width:20.5px;height:22px;background:#c8c8c8;border:1px solid #ababab"></div>
<svg class="a" style="left:917px;top:104px" width="15" height="12" viewBox="0 0 15 12"><path d="M1 1.5H14M3 4.5H12M1 7.5H14M3 10.5H12" stroke="#777" stroke-width="1"/></svg>
<svg class="a" style="left:896px;top:103px" width="15" height="12" viewBox="0 0 15 12"><path d="M0 1.5H15M0 4.5H11M0 7.5H15M0 10.5H11" stroke="#555" stroke-width="1"/></svg>
<div class="a" style="left:888px;top:100px;width:1px;height:20px;background:#d6d6d6"></div>
<svg class="a" style="left:866px;top:102px" width="16" height="13" viewBox="0 0 16 13"><path d="M1 1.5H16M8 4.5H16M8 7.5H16M1 10.5H16" stroke="#555" stroke-width="1"/><path d="M1 6H6M4 4L6 6L4 8" fill="none" stroke="#4a7fc1" stroke-width="1.4"/></svg>
<svg class="a" style="left:843px;top:102px" width="16" height="13" viewBox="0 0 16 13"><path d="M1 1.5H16M8 4.5H16M8 7.5H16M1 10.5H16" stroke="#555" stroke-width="1"/><path d="M6 6H1M3 4L1 6L3 8" fill="none" stroke="#4a7fc1" stroke-width="1.4"/></svg>
<!-- wrap/merge -->
<svg class="a" style="left:782px;top:73px" width="13" height="14" viewBox="0 0 13 14"><text x="0" y="7" font-size="8" font-family="Liberation Sans" font-weight="bold" fill="#555">ab</text><path d="M1 9.5H10Q12 9.5 12 11Q12 12.5 10 12.5H8M9 11L7.5 12.5L9 14" fill="none" stroke="#555" stroke-width="1"/></svg>
<div class="rt" style="left:750px;top:74px">التفاف النص</div>
<svg class="a" style="left:780px;top:101px" width="15" height="15" viewBox="0 0 15 15"><rect x="0.5" y="0.5" width="14" height="14" fill="#fff" stroke="#666"/><path d="M0.5 4.5H14.5M0.5 10.5H14.5" stroke="#666"/><path d="M3 7.5H12" stroke="#4a7fc1" stroke-width="1.2"/></svg>
<div class="rt" style="left:749px;top:102px">دمج وتوسيط</div>
<svg class="a" style="left:698px;top:107px" width="8" height="5" viewBox="0 0 8 5"><path d="M1 1L4 4L7 1" fill="none" stroke="#444" stroke-width="1.2"/></svg>

<!-- ===== Number ===== -->
<div class="box" style="left:545px;top:70px;width:132px;height:21.5px"><span style="position:absolute;right:4px;top:1px;font-size:12px;color:#222;line-height:18px">عام</span></div>
<svg class="a" style="left:549px;top:78px" width="6" height="4" viewBox="0 0 6 4"><path d="M0 0H6L3 3.5Z" fill="#444"/></svg>
<svg class="a" style="left:659px;top:101px" width="16" height="17" viewBox="0 0 16 17"><rect x="0.5" y="0.5" width="15" height="8.5" fill="#fff" stroke="#4a7fc1" stroke-width="1.2"/><rect x="1" y="1" width="3" height="3" fill="#4a7fc1"/><circle cx="8" cy="5" r="2.3" fill="#4a7fc1"/><ellipse cx="11" cy="9.5" rx="4" ry="1.5" fill="#e8c080"/><ellipse cx="7" cy="13" rx="4" ry="1.5" fill="#e8c080"/><ellipse cx="7" cy="15.5" rx="4" ry="1.3" fill="#f0d0a0"/></svg>
<svg class="a" style="left:644px;top:107px" width="8" height="5" viewBox="0 0 8 5"><path d="M1 1L4 4L7 1" fill="none" stroke="#444" stroke-width="1.2"/></svg>
<div class="a" style="left:623px;top:101px;font-size:15px;color:#555;line-height:17px">%</div>
<div class="a" style="left:604px;top:97px;font-size:16px;color:#444;line-height:17px;font-weight:bold;font-family:'Liberation Serif',serif">,</div>
<div class="a" style="left:592px;top:101px;width:1px;height:19px;background:#d6d6d6"></div>
<svg class="a" style="left:569px;top:102px" width="16" height="15" viewBox="0 0 16 15"><text x="7" y="6.5" font-size="8" font-family="Liberation Sans" fill="#555">.0</text><text x="5" y="14" font-size="8" font-family="Liberation Sans" fill="#555">.00</text><path d="M6 4H1M3 2L1 4L3 6" fill="none" stroke="#4a7fc1" stroke-width="1.2"/></svg>
<svg class="a" style="left:547px;top:102px" width="16" height="15" viewBox="0 0 16 15"><text x="4" y="6.5" font-size="8" font-family="Liberation Sans" fill="#555">.00</text><text x="8" y="14" font-size="8" font-family="Liberation Sans" fill="#555">.0</text><path d="M1 11H7M5 9L7 11L5 13" fill="none" stroke="#4a7fc1" stroke-width="1.2"/></svg>

<!-- ===== Styles ===== -->
<svg class="a" style="left:490px;top:66px" width="30" height="30" viewBox="0 0 30 30"><rect x="3.5" y="0.5" width="25" height="22" fill="#fff" stroke="#999"/><path d="M3.5 5.5H28.5M3.5 10.5H28.5M3.5 15.5H28.5M9.5 0.5V22.5M16.5 0.5V22.5M22.5 0.5V22.5" stroke="#aaa"/><rect x="17" y="1" width="5" height="4" fill="#d96b4a"/><rect x="12" y="6" width="10" height="4" fill="#4a7fc1"/><rect x="17" y="11" width="5" height="4" fill="#d96b4a"/><rect x="14" y="16" width="8" height="5" fill="#4a7fc1"/><rect x="0.5" y="15.5" width="13" height="13" fill="#fff" stroke="#555"/><text x="3" y="26" font-size="11" font-family="Liberation Sans" fill="#333">≠</text></svg>
<div class="rt" style="left:506px;top:99px">تنسيق</div>
<div class="rt" style="left:510px;top:113px">شرطي</div>
<svg class="a" style="left:482px;top:116.5px" width="8" height="5" viewBox="0 0 8 5"><path d="M1 1L4 4L7 1" fill="none" stroke="#444" stroke-width="1.2"/></svg>
<svg class="a" style="left:442px;top:68px" width="30" height="28" viewBox="0 0 30 28"><rect x="0.5" y="0.5" width="24" height="21" fill="#fff" stroke="#999"/><rect x="1" y="1" width="23" height="5" fill="#a9c0e0"/><rect x="6" y="6" width="14" height="12" fill="#dbe5f3"/><path d="M0.5 6.5H24.5M0.5 11.5H24.5M0.5 16.5H24.5M6.5 0.5V21.5M13.5 0.5V21.5M19.5 0.5V21.5" stroke="#aaa"/><path d="M27 5L17 17" stroke="#666" stroke-width="3"/><path d="M17 16Q12 17 11 24Q17 24 19 19Z" fill="#4a7fc1"/></svg>
<div class="rt" style="left:456px;top:99px">التنسيق</div>
<div class="rt" style="left:461px;top:113px">كجدول</div>
<svg class="a" style="left:433px;top:116.5px" width="8" height="5" viewBox="0 0 8 5"><path d="M1 1L4 4L7 1" fill="none" stroke="#444" stroke-width="1.2"/></svg>
<svg class="a" style="left:397px;top:67px" width="30" height="28" viewBox="0 0 30 28"><rect x="0.5" y="0.5" width="24" height="21" fill="#fff" stroke="#999"/><path d="M0.5 5.5H24.5M0.5 16.5H24.5M4.5 0.5V21.5M20.5 0.5V21.5" stroke="#aaa"/><rect x="5" y="6" width="15" height="10" fill="#c7d6ec" stroke="#8aa8d4"/><path d="M27 5L17 17" stroke="#666" stroke-width="3"/><path d="M17 16Q12 17 11 24Q17 24 19 19Z" fill="#4a7fc1"/></svg>
<div class="rt" style="left:413px;top:99px">أنماط</div>
<div class="rt" style="left:415px;top:113px">الخلايا</div>
<svg class="a" style="left:389px;top:116.5px" width="8" height="5" viewBox="0 0 8 5"><path d="M1 1L4 4L7 1" fill="none" stroke="#444" stroke-width="1.2"/></svg>

<!-- ===== Cells ===== -->
<svg class="a" style="left:340px;top:67px" width="27" height="24" viewBox="0 0 27 24"><path d="M1.5 1.5H13.5V6.5H1.5ZM7.5 1.5V6.5" fill="#fff" stroke="#888" stroke-width="1.1"/><path d="M1.5 14.5H13.5V23.5H1.5ZM1.5 19H13.5M7.5 14.5V23.5" fill="#fff" stroke="#888" stroke-width="1.1"/><path d="M12 8.5H25.5V13H12ZM18.7 8.5V13" fill="#ccd3dc" stroke="#9aa" stroke-width="1"/><path d="M10 10.7H3M5.5 8.2L3 10.7L5.5 13.2" fill="none" stroke="#4a78b0" stroke-width="1.5"/></svg>
<div class="rt" style="left:353px;top:99px">إدراج</div>
<svg class="a" style="left:349px;top:116.5px" width="8" height="5" viewBox="0 0 8 5"><path d="M1 1L4 4L7 1" fill="none" stroke="#444" stroke-width="1.2"/></svg>
<svg class="a" style="left:298px;top:67px" width="30" height="26" viewBox="0 0 30 26"><path d="M15.5 1.5H28.5V7H15.5ZM22 1.5V7" fill="#fff" stroke="#888" stroke-width="1.1"/><path d="M15.5 15.5H28.5V25H15.5ZM15.5 20.2H28.5M22 15.5V25" fill="#fff" stroke="#888" stroke-width="1.1"/><path d="M15 9H23.5V13.5H15ZM19.2 9V13.5" fill="#ccd3dc" stroke="#9aa" stroke-width="1"/><path d="M2 4L14 16M14 4L2 16" stroke="#d9634a" stroke-width="1.7"/></svg>
<div class="rt" style="left:313px;top:99px">حذف</div>
<svg class="a" style="left:309px;top:116.5px" width="8" height="5" viewBox="0 0 8 5"><path d="M1 1L4 4L7 1" fill="none" stroke="#444" stroke-width="1.2"/></svg>
<svg class="a" style="left:261px;top:66px" width="28" height="28" viewBox="0 0 28 28"><path d="M0.7 1V5.5M25.5 1V5.5" stroke="#555" stroke-width="1.1"/><path d="M2 3.3H24M5 1L2 3.3L5 5.6M21 1L24 3.3L21 5.6" fill="none" stroke="#4a78b0" stroke-width="1.3"/><rect x="0.5" y="7.5" width="26" height="16" fill="#fff" stroke="#888" stroke-width="1.1"/><path d="M0.5 11.5H26.5M0.5 19.5H26.5M7.5 7.5V23.5M13.5 7.5V23.5M20.5 7.5V23.5" stroke="#999" stroke-width="1"/><rect x="8" y="12" width="5" height="7" fill="#3d78bf"/><path d="M0.5 23.5V26Q4 27.5 7 26Q10 27.5 14 26V23.5" fill="#fff" stroke="#999" stroke-width="1"/></svg>
<div class="rt" style="left:274px;top:99px">تنسيق</div>
<svg class="a" style="left:270px;top:116.5px" width="8" height="5" viewBox="0 0 8 5"><path d="M1 1L4 4L7 1" fill="none" stroke="#444" stroke-width="1.2"/></svg>

<!-- ===== Editing ===== -->
<svg class="a" style="left:222px;top:66px" width="15" height="14" viewBox="0 0 15 14"><path d="M14 3V1H1.5L7.5 7L1.5 13H14V11" fill="none" stroke="#444" stroke-width="1.8"/></svg>
<svg class="a" style="left:202px;top:70px" width="8" height="5" viewBox="0 0 8 5"><path d="M1 1L4 4L7 1" fill="none" stroke="#444" stroke-width="1.2"/></svg>
<svg class="a" style="left:222px;top:87px" width="15" height="15" viewBox="0 0 15 15"><rect x="0.5" y="0.5" width="14" height="14" fill="#fff" stroke="#666"/><rect x="0.5" y="0.5" width="14" height="3.5" fill="#666"/><path d="M7.5 5.5V12M4.5 9L7.5 12L10.5 9" fill="none" stroke="#3d78bf" stroke-width="1.8"/></svg>
<svg class="a" style="left:210px;top:93px" width="8" height="5" viewBox="0 0 8 5"><path d="M1 1L4 4L7 1" fill="none" stroke="#444" stroke-width="1.2"/></svg>
<svg class="a" style="left:222px;top:109px" width="16" height="14" viewBox="0 0 16 14"><path d="M10 1L15 6L7 13H3L1 11Z" fill="#e58aa0"/><path d="M1 11L5 7L9 11L6.5 13.5H3Z" fill="#f4c1cd"/></svg>
<svg class="a" style="left:210px;top:114px" width="8" height="5" viewBox="0 0 8 5"><path d="M1 1L4 4L7 1" fill="none" stroke="#444" stroke-width="1.2"/></svg>
<svg class="a" style="left:157px;top:67px" width="30" height="27" viewBox="0 0 30 27"><text x="0.5" y="13" font-size="14" font-family="Liberation Sans" font-weight="bold" fill="#4a78b8">A</text><text x="1" y="25.5" font-size="13" font-family="Liberation Sans" font-weight="bold" fill="#9b74c0">Z</text><path d="M13.5 8.5H29L23 15.5V22.5H19.5V15.5Z" fill="#777" stroke="#777" stroke-width="1" stroke-linejoin="round"/><rect x="20.5" y="16" width="2" height="6" fill="#fff"/></svg>
<div class="rt" style="left:171px;top:99px">فرز</div>
<div class="rt" style="left:177px;top:113px">وتصفية</div>
<svg class="a" style="left:150px;top:116.5px" width="8" height="5" viewBox="0 0 8 5"><path d="M1 1L4 4L7 1" fill="none" stroke="#444" stroke-width="1.2"/></svg>
<svg class="a" style="left:112px;top:66px" width="28" height="28" viewBox="0 0 28 28"><circle cx="16.5" cy="10.5" r="8" fill="#fafafa" stroke="#4a7ab5" stroke-width="2.4"/><path d="M11 16L2.5 24.5" stroke="#4a7ab5" stroke-width="3.4" stroke-linecap="round"/></svg>
<div class="rt" style="left:125px;top:99px">بحث</div>
<div class="rt" style="left:131px;top:113px">وتحديد</div>
<svg class="a" style="left:103px;top:116.5px" width="8" height="5" viewBox="0 0 8 5"><path d="M1 1L4 4L7 1" fill="none" stroke="#444" stroke-width="1.2"/></svg>

<!-- ===== Add-ins ===== -->
<div class="a" style="left:54px;top:75px;width:10px;height:10px;border-radius:50%;background:#f4900c"></div>
<div class="rt" style="left:59px;top:99px">الوظائف</div>
<div class="rt" style="left:59px;top:113px">الإضافية</div>

<!-- QAT -->
<svg class="a" style="left:1258px;top:155px" width="14" height="14" viewBox="0 0 14 14"><path d="M0.5 0.5H11L13.5 3V13.5H0.5Z" fill="#8064a8"/><rect x="3" y="1.5" width="8" height="4.5" fill="#f4effa"/><rect x="3" y="9" width="8" height="4.5" fill="#f4effa"/><rect x="6" y="10.5" width="2" height="3" fill="#8064a8"/></svg>
<svg class="a" style="left:1230px;top:155px" width="15" height="13" viewBox="0 0 15 13"><path d="M5 1.5L1.5 5L5 8.5M1.5 5H9Q13.5 5 13.5 9Q13.5 12 10 12.5" fill="none" stroke="#b4b4b4" stroke-width="1.8"/></svg>
<svg class="a" style="left:1217px;top:159px" width="7" height="5" viewBox="0 0 7 5"><path d="M0.5 1L3.5 4L6.5 1" fill="none" stroke="#c0c0c0" stroke-width="1"/></svg>
<svg class="a" style="left:1195px;top:154px" width="12" height="15" viewBox="0 0 12 15"><path d="M0.5 0.5H7.5L11.5 4.5V14.5H0.5Z" fill="#fff" stroke="#666"/><path d="M7.5 0.5V4.5H11.5" fill="none" stroke="#666"/></svg>
<svg class="a" style="left:1167px;top:155px" width="15" height="13" viewBox="0 0 15 13"><path d="M10 1.5L13.5 5L10 8.5M13.5 5H6Q1.5 5 1.5 9Q1.5 12 5 12.5" fill="none" stroke="#3d78bf" stroke-width="1.8"/></svg>
<svg class="a" style="left:1153px;top:159px" width="7" height="5" viewBox="0 0 7 5"><path d="M0.5 1L3.5 4L6.5 1" fill="none" stroke="#444" stroke-width="1.2"/></svg>
<svg class="a" style="left:1130px;top:155px" width="15" height="13" viewBox="0 0 15 13"><rect x="0.5" y="0.5" width="14" height="12" fill="#fff" stroke="#4a6fa5"/><rect x="1" y="1" width="13" height="2.5" fill="#4a6fa5"/><path d="M2.5 6.5H6M8 6.5H12.5M2.5 9.5H6M8 9.5H12.5" stroke="#555"/><rect x="7.5" y="5" width="5" height="6" fill="none" stroke="#666"/></svg>
<svg class="a" style="left:1102px;top:155px" width="17" height="13" viewBox="0 0 17 13"><path d="M0.5 12.5V1.5H6L7.5 3H14.5V12.5Z" fill="#f0c674"/><path d="M0.5 12.5L3 5.5H16.5L14.5 12.5Z" fill="#f6d58f"/></svg>
<svg class="a" style="left:1080px;top:153px" width="13" height="17" viewBox="0 0 13 17"><circle cx="5" cy="4" r="3.5" fill="none" stroke="#8ab4e0" stroke-width="1"/><path d="M4 4V11L2 9.5Q1 9.5 1.5 11L4 15.5H11.5Q12.5 14 12.5 11V8.5Q12.5 7.5 11 7.5H6V4Q6 3 5 3Q4 3 4 4Z" fill="#555"/></svg>
<svg class="a" style="left:1064px;top:159px" width="8" height="5" viewBox="0 0 8 5"><path d="M1 1L4 4L7 1" fill="none" stroke="#444" stroke-width="1.2"/></svg>
<svg class="a" style="left:1045px;top:157px" width="7" height="8" viewBox="0 0 7 8"><path d="M0.5 1H6.5" stroke="#444" stroke-width="1.2"/><path d="M0.5 3.5H6.5L3.5 7Z" fill="#444"/></svg>

<!-- formula bar -->
<div class="box" style="left:5.5px;top:187px;width:94px;height:23px;border-color:#d0d0d0"><span style="position:absolute;left:5px;top:3px;font-size:12px;color:#333;line-height:16px">H11</span></div>
<svg class="a" style="left:86px;top:196px" width="7" height="4" viewBox="0 0 7 4"><path d="M0 0H7L3.5 4Z" fill="#555"/></svg>
<svg class="a" style="left:112px;top:191px" width="3" height="15" viewBox="0 0 3 15"><circle cx="1.5" cy="2" r="0.9" fill="#aaa"/><circle cx="1.5" cy="6" r="0.9" fill="#aaa"/><circle cx="1.5" cy="10" r="0.9" fill="#aaa"/><circle cx="1.5" cy="14" r="0.9" fill="#aaa"/></svg>
<div class="box" style="left:128.5px;top:187px;width:102.5px;height:23px;border-color:#d8d8d8;background:#fbfbfb"></div>
<svg class="a" style="left:141px;top:193px" width="11" height="11" viewBox="0 0 11 11"><path d="M1 1L10 10M10 1L1 10" stroke="#c6c6c6" stroke-width="1.3"/></svg>
<svg class="a" style="left:173px;top:193px" width="13" height="11" viewBox="0 0 13 11"><path d="M1 6L4.5 9.5L12 1" fill="none" stroke="#c6c6c6" stroke-width="1.6"/></svg>
<div class="a" style="left:207px;top:190px;font-size:13px;font-style:italic;font-weight:bold;color:#666;font-family:'Liberation Serif',serif;line-height:16px">f<span style="font-size:9px">x</span></div>
<div class="a" style="left:232px;top:186px;width:1px;height:24px;background:#cfcfcf"></div>
<div class="box" style="left:234.5px;top:186.5px;width:1041px;height:23.5px;border-color:#d0d0d0"></div>
<svg class="a" style="left:1262px;top:195px" width="10" height="7" viewBox="0 0 10 7"><path d="M1 1L5 5L9 1" fill="none" stroke="#444" stroke-width="1.5"/></svg>
<!-- vertical scrollbar -->
<div class="a" style="left:3px;top:222px;width:14px;height:414px;background:#f0f0f0"></div>
<div class="a" style="left:3px;top:222px;width:14px;height:13px;background:#fff;border:1px solid #aaa"></div>
<svg class="a" style="left:6px;top:226px" width="8" height="5" viewBox="0 0 8 5"><path d="M0 4.5H8L4 0.5Z" fill="#222"/></svg>
<div class="a" style="left:3.5px;top:235px;width:13px;height:290px;background:#fff;border:1px solid #b0b0b0"></div>
<div class="a" style="left:3px;top:622px;width:14px;height:13px;background:#fff;border:1px solid #aaa"></div>
<svg class="a" style="left:6px;top:626px" width="8" height="5" viewBox="0 0 8 5"><path d="M0 0.5H8L4 4.5Z" fill="#222"/></svg>

<!-- sheet tab bar -->
<div class="a" style="left:0;top:635px;width:1280px;height:27px;background:#e6e6e6;border-top:1px solid #9a9a9a;border-bottom:1px solid #bdbdbd"></div>
<div class="a" style="left:20px;top:641px;width:14px;height:14px;background:#fff;border:1px solid #b0b0b0"></div>
<svg class="a" style="left:24px;top:644px" width="5" height="8" viewBox="0 0 5 8"><path d="M5 0V8L0.5 4Z" fill="#222"/></svg>
<div class="a" style="left:34px;top:641px;width:28px;height:14px;background:#f0f0f0"></div>
<div class="a" style="left:62px;top:641px;width:421px;height:14px;background:#fff;border:1px solid #b0b0b0"></div>
<div class="a" style="left:483px;top:641px;width:14px;height:14px;background:#fff;border:1px solid #b0b0b0"></div>
<svg class="a" style="left:488px;top:644px" width="5" height="8" viewBox="0 0 5 8"><path d="M0 0V8L4.5 4Z" fill="#222"/></svg>
<svg class="a" style="left:510px;top:640px" width="4" height="16" viewBox="0 0 4 16"><circle cx="2" cy="3" r="0.9" fill="#aaa"/><circle cx="2" cy="8" r="0.9" fill="#aaa"/><circle cx="2" cy="13" r="0.9" fill="#aaa"/></svg>
<svg class="a" style="left:706px;top:640px" width="16" height="16" viewBox="0 0 16 16"><circle cx="8" cy="8" r="7" fill="none" stroke="#666" stroke-width="1.1"/><path d="M8 4V12M4 8H12" stroke="#444" stroke-width="1.6"/></svg>
<!-- tabs -->
<div class="tsep" style="left:754px"></div>
<div class="stab" style="left:780px">ورقة٦</div>
<div class="tsep" style="left:802px"></div>
<div class="stab" style="left:829px">ورقة٥</div>
<div class="a" style="left:851px;top:635px;width:49px;height:23px;background:#fff;border-bottom:2px solid #217346"></div>
<div class="stab" style="left:876px;color:#217346;font-weight:bold">ورقة٢</div>
<div class="stab" style="left:931px;font-weight:bold;color:#222">موظفين</div>
<div class="tsep" style="left:957px"></div>
<div class="stab" style="left:984px">ورقة٣</div>
<div class="tsep" style="left:1005px"></div>
<div class="stab" style="left:1032px">ورقة٤</div>
<div class="tsep" style="left:1054px"></div>
<div class="stab" style="left:1103px">فاتورة مبيعات</div>
<div class="tsep" style="left:1137px"></div>
<div class="stab" style="left:1167px">ورقة١</div>
<div class="tsep" style="left:1185px"></div>
<svg class="a" style="left:1222px;top:644px" width="5" height="8" viewBox="0 0 5 8"><path d="M5 0V8L0.5 4Z" fill="#bbb"/></svg>
<svg class="a" style="left:1250px;top:644px" width="5" height="8" viewBox="0 0 5 8"><path d="M0 0V8L4.5 4Z" fill="#bbb"/></svg>
<!-- row header bottom strip near tabs: row 16 header continues -->

<!-- status bar -->
<div class="a" style="left:0;top:662px;width:1280px;height:20px;background:#f3f3f3"></div>
<div class="a" style="left:8.5px;top:664.5px;font-size:11px;color:#333;line-height:15px">80%</div>
<svg class="a" style="left:46px;top:665px" width="10" height="10" viewBox="0 0 10 10"><path d="M5 1V9M1 5H9" stroke="#666" stroke-width="1"/></svg>
<div class="a" style="left:59px;top:670.5px;width:93px;height:1px;background:#555"></div>
<div class="a" style="left:106px;top:668px;width:1px;height:6px;background:#555"></div>
<div class="a" style="left:113px;top:666px;width:4px;height:10px;background:#555"></div>
<div class="a" style="left:157px;top:670.5px;width:8px;height:1px;background:#555"></div>
<svg class="a" style="left:183px;top:665px" width="14" height="12" viewBox="0 0 14 12"><rect x="0.5" y="0.5" width="12.5" height="11" fill="none" stroke="#555"/><path d="M3.5 0.5V6.5H9.5V0.5" fill="none" stroke="#555"/></svg>
<svg class="a" style="left:220px;top:665px" width="14" height="12" viewBox="0 0 14 12"><rect x="0.5" y="0.5" width="12.5" height="11" fill="none" stroke="#555"/><rect x="3" y="2.5" width="7.5" height="7" fill="none" stroke="#555"/><path d="M4.5 4.5H9M4.5 6H9M4.5 7.5H9" stroke="#777" stroke-width="0.6"/></svg>
<div class="a" style="left:245.5px;top:662px;width:37px;height:20px;background:#c6c6c6"></div>
<svg class="a" style="left:258px;top:665px" width="13" height="13" viewBox="0 0 13 13"><rect x="0.5" y="0.5" width="12" height="12" fill="none" stroke="#666"/><path d="M4.5 0.5V12.5M8.5 0.5V12.5M0.5 4.5H12.5M0.5 8.5H12.5" stroke="#666"/></svg>
<div class="a" style="left:1246px;top:664px;font-size:11px;color:#333;line-height:15px;direction:rtl">جاهز</div>
<svg class="a" style="left:1213px;top:664px" width="14" height="13" viewBox="0 0 14 13"><rect x="0.5" y="2.5" width="12.5" height="10" fill="none" stroke="#555"/><rect x="1" y="0" width="4" height="5" rx="1.5" fill="#555"/><path d="M3 7.5H11M3 10H11M6 5.5V12M9 5.5V12" stroke="#777" stroke-width="0.8"/></svg>
<svg class="a" style="left:1184px;top:663px" width="16" height="15" viewBox="0 0 16 15"><path d="M5 3Q1 4 1.5 8Q2 12 6 12" fill="none" stroke="#555" stroke-width="1.3"/><circle cx="8" cy="2" r="1.4" fill="#555"/><path d="M6 5L8 8H12M8 8V5" fill="none" stroke="#555" stroke-width="1.3"/><path d="M9 9L15 15M15 9L9 15" stroke="#444" stroke-width="1.3"/></svg>
<div class="a" style="left:880px;top:664.5px;width:300px;transform:scaleX(1.06);transform-origin:right center;font-size:11px;color:#222;line-height:15px;direction:rtl;white-space:nowrap;text-align:right;font-weight:bold">إمكانية الوصول لذوي الاحتياجات الخاصة: اطلع على توصيات</div>

<!-- taskbar -->
<div class="a" style="left:0;top:682px;width:1280px;height:37px;background:#d9d9d9"></div>
<div class="a" style="left:4px;top:682px;width:1px;height:37px;background:#b0b0b0"></div>
<svg class="a" style="left:15px;top:692px" width="25" height="24" viewBox="0 0 25 24"><path d="M8 0.5H24V11H14L10.5 14V11H8Z" fill="#222"/><path d="M11 3.5H21M11 6.5H21" stroke="#ddd" stroke-width="1"/><circle cx="8" cy="15" r="7.3" fill="#d9d9d9" stroke="#666" stroke-width="1"/><text x="4.5" y="19.5" font-size="11" font-family="Liberation Sans" fill="#333">2</text></svg>
<div class="a" style="left:50px;top:687px;width:46px;font-size:11px;color:#222;line-height:13px;text-align:center;white-space:nowrap"><span style="display:inline-block">ص</span> <span style="display:inline-block">١٠:٢٤</span></div>
<div class="a" style="left:48px;top:702px;width:49px;font-size:11px;color:#222;line-height:13px;text-align:center;white-space:nowrap;direction:ltr;unicode-bidi:bidi-override">٤٧/٠٢/٠٥</div>
<div class="a" style="left:109px;top:694px;font-size:11px;color:#222;line-height:13px">ع</div>
<svg class="a" style="left:137px;top:695px" width="12" height="12" viewBox="0 0 12 12"><path d="M1 11A10 10 0 0 1 11 1M3.5 11A7.5 7.5 0 0 1 11 3.5M6 11A5 5 0 0 1 11 6" fill="none" stroke="#666" stroke-width="1"/><circle cx="10" cy="10" r="1.5" fill="#222"/></svg>
<svg class="a" style="left:156px;top:695px" width="16" height="11" viewBox="0 0 16 11"><rect x="0.7" y="1.2" width="12.5" height="8.5" rx="1" fill="none" stroke="#222" stroke-width="1.3"/><rect x="2.5" y="3" width="3.5" height="5" fill="#222"/><rect x="14" y="3.5" width="1.5" height="4" fill="#222"/></svg>
<svg class="a" style="left:178px;top:694px" width="17" height="13" viewBox="0 0 17 13"><path d="M1 4.5H4L8 1V12L4 8.5H1Z" fill="none" stroke="#222" stroke-width="1.1"/><path d="M10.5 4Q12 6.5 10.5 9M12.5 2.5Q15 6.5 12.5 10.5M14.5 1Q17.5 6.5 14.5 12" fill="none" stroke="#555" stroke-width="0.9"/></svg>
<svg class="a" style="left:203px;top:696px" width="13" height="8" viewBox="0 0 13 8"><path d="M1 7L6.5 1.5L12 7" fill="none" stroke="#222" stroke-width="1.4"/></svg>
<svg class="a" style="left:224px;top:685px" width="9" height="6" viewBox="0 0 9 6"><path d="M4 0.5L1 3L4 5.5M8 0.5L5 3L8 5.5" fill="none" stroke="#6b6ba6" stroke-width="1"/></svg>
<div class="a" style="left:240px;top:693px;font-size:12px;color:#222;line-height:14px">abdo</div>
<div class="a" style="left:1004px;top:682px;width:45px;height:37px;background:#ececec"></div>
<div class="a" style="left:1004px;top:716.5px;width:45px;height:2.5px;background:#1f6fc0"></div>
<svg class="a" style="left:879px;top:691px" width="21" height="18" viewBox="0 0 21 18"><path d="M0.5 2H7L9 4H20.5V16H0.5Z" fill="#f6c94d"/><path d="M0.5 5H20.5V16H0.5Z" fill="#fbd868"/><path d="M5 17.5V11H16V17.5H13V13.5H8V17.5Z" fill="#3a7bbf"/></svg>
<svg class="a" style="left:924px;top:689px" width="23" height="23" viewBox="0 0 23 23"><circle cx="11.5" cy="11.5" r="11" fill="#fcc934"/><path d="M11.5 11.5L2 6A11 11 0 0 1 21 6Z" fill="#e33b2e"/><path d="M11.5 11.5L2 6A11 11 0 0 0 11.5 22.5Z" fill="#1e8e3e"/><circle cx="11.5" cy="11.5" r="5" fill="#fff"/><circle cx="11.5" cy="11.5" r="3.8" fill="#1a73e8"/></svg>
<svg class="a" style="left:971px;top:690px" width="20" height="19" viewBox="0 0 20 19"><rect x="0" y="0" width="20" height="19" rx="3.5" fill="#001e36"/><text x="2.5" y="14" font-size="11" font-weight="bold" font-family="Liberation Sans" fill="#31a8ff">Ps</text></svg>
<svg class="a" style="left:1015px;top:690px" width="24" height="20" viewBox="0 0 24 20"><rect x="6" y="0" width="18" height="20" rx="2" fill="#21a366"/><rect x="6" y="10" width="18" height="10" fill="#107c41"/><rect x="15" y="0" width="9" height="10" fill="#33c481"/><rect x="0" y="4" width="12" height="12" rx="1.5" fill="#107c41"/><path d="M3 7L9 13M9 7L3 13" stroke="#fff" stroke-width="1.8"/></svg>
<svg class="a" style="left:1062px;top:690px" width="23" height="20" viewBox="0 0 23 20"><rect x="6" y="0" width="17" height="20" rx="2" fill="#2b7cd3"/><rect x="6" y="0" width="17" height="6" fill="#41a5ee"/><rect x="6" y="13" width="17" height="7" fill="#185abd"/><rect x="0" y="4" width="12" height="12" rx="1.5" fill="#185abd"/><text x="1" y="14" font-size="10" font-weight="bold" font-family="Liberation Sans" fill="#fff">W</text></svg>
<svg class="a" style="left:1107px;top:689px" width="24" height="22" viewBox="0 0 24 22"><defs><linearGradient id="cpa" x1="0" y1="0" x2="0" y2="1"><stop offset="0" stop-color="#1e90e0"/><stop offset="0.5" stop-color="#3cc060"/><stop offset="1" stop-color="#f5d020"/></linearGradient><linearGradient id="cpb" x1="0" y1="0" x2="0" y2="1"><stop offset="0" stop-color="#c04ad8"/><stop offset="0.5" stop-color="#f0508a"/><stop offset="1" stop-color="#f08040"/></linearGradient></defs><path d="M4 1H11Q14 1 13 4L10 13Q9 15 6.5 15H3Q0.5 15 1 12L1.5 4Q2 1 4 1Z" fill="url(#cpa)"/><path d="M15 7H20Q23 7 22.5 10L22 18Q21.5 21 19 21H11Q8.5 21 9.5 18L12.5 9Q13 7 15 7Z" fill="url(#cpb)"/><path d="M9.5 1H11.5Q14 1 13.5 4L12.5 7H10Z" fill="#2456c8"/><path d="M6 15L8.5 21H11Q9 20 10 17Z" fill="#e85a2a"/></svg>
<svg class="a" style="left:1153px;top:689px" width="23" height="23" viewBox="0 0 23 23"><defs><linearGradient id="eg1" x1="0" y1="0" x2="1" y2="0.6"><stop offset="0" stop-color="#1fa0d8"/><stop offset="0.6" stop-color="#3cc8a0"/><stop offset="1" stop-color="#5ad85a"/></linearGradient><linearGradient id="eg2" x1="0" y1="0" x2="0" y2="1"><stop offset="0" stop-color="#2a8ee0"/><stop offset="1" stop-color="#0c5aa8"/></linearGradient></defs><circle cx="11.5" cy="11.5" r="11" fill="url(#eg2)"/><path d="M2 7Q5 0.5 12 0.5Q20 0.5 22.5 9Q23 14 19 15.5H12Q16 14 15.5 11Q15 8 11.5 8Q6 8 2 7Z" fill="url(#eg1)"/><path d="M19 15.5Q15 15.5 13 15Q9.5 14 10 11Q10.5 8.5 13 8.2Q15.5 8.5 15.5 11Q15.5 14 19 15.5Z" fill="#e0e8f0"/><path d="M22 13.5Q21 21 13 22Q18 20 19 15.5Z" fill="#0c5aa8"/></svg>
<svg class="a" style="left:1201px;top:689px" width="23" height="23" viewBox="0 0 23 23"><circle cx="13.5" cy="9.5" r="7.5" fill="none" stroke="#111" stroke-width="2"/><path d="M8 15L1.5 21.5" stroke="#111" stroke-width="2.2" stroke-linecap="round"/></svg>
<svg class="a" style="left:1249px;top:692px" width="17" height="16" viewBox="0 0 17 16"><path d="M0 2.2L7.5 1V7.5H0ZM8.5 0.9L17 0V7.5H8.5ZM0 8.5H7.5V15L0 13.8ZM8.5 8.5H17V16L8.5 15Z" fill="#111"/></svg>

<svg class="a" style="left:555px;top:625px;opacity:0.065" width="170" height="90" viewBox="0 0 170 90">
<g fill="none" stroke="#000" stroke-width="6" stroke-linecap="round">
<path d="M33 13V37"/>
<path d="M17 30A9.5 9.5 0 0 0 25 46H147"/>
<circle cx="59" cy="35" r="10"/>
<circle cx="147" cy="38" r="10"/>
<path d="M86 34V45M101 34V45M114 34V45M126 34V45"/>
</g>
<g fill="#000"><circle cx="54" cy="14" r="3.6"/><circle cx="65" cy="14" r="3.6"/><circle cx="81" cy="22.5" r="3.6"/><circle cx="92" cy="22.5" r="3.6"/></g>
<text x="8" y="74" font-size="25" font-weight="bold" font-family="Liberation Sans" fill="#000" textLength="153" lengthAdjust="spacingAndGlyphs">mostaql.com</text>
</svg>

</body></html>
